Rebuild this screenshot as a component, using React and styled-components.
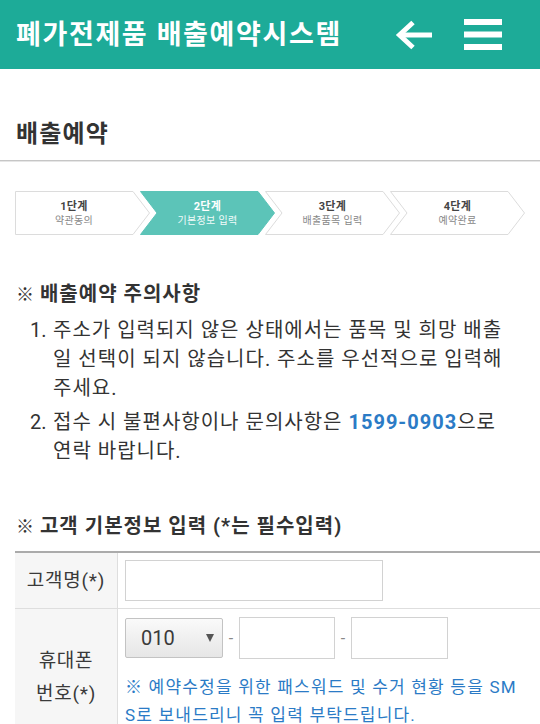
import React from 'react';
import styled, { createGlobalStyle } from 'styled-components';

const GlobalStyle = createGlobalStyle`
  html, body { margin: 0; padding: 0; background: #fff; }
  body {
    font-family: Roboto, "Noto Sans CJK KR", sans-serif;
    color: #333;
    -webkit-font-smoothing: antialiased;
  }
  * { box-sizing: border-box; }
`;

const Page = styled.div`
  width: 540px;
  overflow: hidden;
`;

const Header = styled.header`
  height: 69px;
  background: #1dab98;
  display: flex;
  align-items: center;
  padding: 0 38px 0 16px;
`;

const Title = styled.h1`
  margin: 0;
  flex: 1;
  font-size: 27px;
  line-height: 32px;
  letter-spacing: 0.06em;
  font-weight: 700;
  color: #fff;
`;

const IconButton = styled.button`
  display: flex;
  align-items: center;
  justify-content: center;
  width: 38px;
  height: 31px;
  padding: 0;
  border: 0;
  background: none;
  margin-left: ${p => p.$gap || 0}px;
`;

const PageTitle = styled.h2`
  margin: 0;
  padding: 50px 16px 11px;
  font-size: 24px;
  line-height: 30px;
  letter-spacing: 0.05em;
  font-weight: 700;
  color: #333;
  border-bottom: 1px solid #c6c6c6;
  box-shadow: 0 1px 0 #e6e6e6;
`;

const Steps = styled.div`
  display: flex;
  padding: 0 15px;
  margin-top: 30px;
  height: 44px;
`;

const Step = styled.div`
  position: relative;
  width: 135px;
  height: 44px;
  flex: none;
  margin-left: ${p => (p.$first ? 0 : -10)}px;
  padding: 0 17px 0 ${p => (p.$first ? 0 : 17)}px;
  display: flex;
  flex-direction: column;
  justify-content: center;
  align-items: center;
  gap: 1px;
`;

const StepShape = styled.svg`
  position: absolute;
  inset: 0;
  overflow: visible;
`;

const StepNo = styled.span`
  position: relative;
  font-size: 11px;
  line-height: 13px;
  letter-spacing: 0.03em;
  font-weight: 700;
  color: ${p => (p.$active ? '#fff' : '#444')};
`;

const StepName = styled.span`
  position: relative;
  font-size: 10px;
  line-height: 13px;
  letter-spacing: 0.03em;
  color: ${p => (p.$active ? '#f1fbfa' : '#888')};
`;

const Heading = styled.h3`
  margin: ${p => p.$top}px 0 0;
  padding: 0 16px;
  font-size: 20px;
  line-height: ${p => p.$lh || 24}px;
  letter-spacing: 0.05em;
  font-weight: 700;
  color: #333;
`;

const Mark = styled.span`
  font-size: 0.9em;
  letter-spacing: 0;
  font-weight: 900;
`;

const List = styled.ol`
  list-style: none;
  margin: 9px 0 0;
  padding: 0 26px 0 30px;
`;

const Item = styled.li`
  display: flex;
  font-size: 20px;
  line-height: 29px;
  letter-spacing: 0.05em;
  color: #333;
  & + & { margin-top: 5px; }
`;

const Num = styled.span`
  flex: none;
  width: 23px;
  letter-spacing: 0;
`;

const ItemText = styled.p`
  margin: 0;
  flex: 1;
`;

const Phone = styled.b`
  color: #2b7bc6;
  font-weight: 700;
`;

const Table = styled.div`
  margin: 10px 0 0 15px;
  border-top: 2px solid #ababab;
`;

const Row = styled.div`
  display: flex;
  border-bottom: 1px solid #dedede;
`;

const Label = styled.div`
  flex: none;
  width: 103px;
  background: #f6f6f6;
  border-right: 1px solid #dedede;
  display: flex;
  align-items: center;
  justify-content: center;
  text-align: center;
  font-size: 19px;
  line-height: 33px;
  letter-spacing: 0.04em;
  color: #3a3a3a;
`;

const Cell = styled.div`
  flex: 1;
  padding: ${p => p.$pad};
`;

const TextInput = styled.input`
  display: block;
  width: ${p => p.$w}px;
  height: ${p => p.$h}px;
  border: 1px solid #d2d2d2;
  background: #fff;
  border-radius: 0;
  padding: 0 8px;
  font: inherit;
  outline: none;
`;

const PhoneLine = styled.div`
  display: flex;
  align-items: center;
`;

const SelectWrap = styled.div`
  position: relative;
  width: 98px;
  height: 40px;
  flex: none;
`;

const Select = styled.select`
  appearance: none;
  -webkit-appearance: none;
  width: 100%;
  height: 100%;
  margin: 0;
  border: 1px solid #c3c3c3;
  border-radius: 2px;
  background: linear-gradient(#fafafa, #e6e6e6);
  padding: 0 0 0 15px;
  font-family: Roboto, "Noto Sans CJK KR", sans-serif;
  font-size: 20px;
  color: #3a3a3a;
`;

const Caret = styled.svg`
  position: absolute;
  right: 9px;
  top: 16px;
  pointer-events: none;
`;

const Dash = styled.span`
  flex: none;
  width: 16px;
  text-align: center;
  font-size: 16px;
  color: #888;
`;

const Note = styled.p`
  margin: 14px 0 0;
  font-size: 17px;
  line-height: 28px;
  letter-spacing: 0.07em;
  color: #2b7bc6;
  word-break: break-all;
`;

const steps = [
  { no: '1단계', name: '약관동의' },
  { no: '2단계', name: '기본정보 입력', active: true },
  { no: '3단계', name: '배출품목 입력' },
  { no: '4단계', name: '예약완료' },
];

function StepBg({ first, active }) {
  const W = 135, d = 17, h = 44;
  const path = first
    ? `M0.5 0.5 H${W - d} L${W - 0.5} ${h / 2} L${W - d} ${h - 0.5} H0.5 Z`
    : `M0.5 0.5 H${W - d} L${W - 0.5} ${h / 2} L${W - d} ${h - 0.5} H0.5 L${d} ${h / 2} Z`;
  return (
    <StepShape width={W} height={h} viewBox={`0 0 ${W} ${h}`}>
      <path
        d={path}
        fill={active ? '#5cc4b8' : '#fff'}
        stroke={active ? '#5cc4b8' : '#dcdcdc'}
        strokeWidth="1"
      />
    </StepShape>
  );
}

export default function App() {
  return (
    <Page>
      <GlobalStyle />
      <Header>
        <Title>폐가전제품 배출예약시스템</Title>
        <IconButton aria-label="뒤로">
          <svg width="38" height="30" viewBox="0 0 38 30">
            <path d="M5 15 H37" stroke="#fff" strokeWidth="5" fill="none" />
            <path d="M18 2.5 L4.5 15 L18 27.5" stroke="#fff" strokeWidth="5" fill="none" strokeLinejoin="miter" />
          </svg>
        </IconButton>
        <IconButton $gap={31} aria-label="메뉴">
          <svg width="38" height="31" viewBox="0 0 38 31">
            <rect x="0" y="0" width="38" height="6" fill="#fff" />
            <rect x="0" y="12.5" width="38" height="6" fill="#fff" />
            <rect x="0" y="25" width="38" height="6" fill="#fff" />
          </svg>
        </IconButton>
      </Header>

      <PageTitle>배출예약</PageTitle>

      <Steps>
        {steps.map((s, i) => (
          <Step key={s.no} $first={i === 0}>
            <StepBg first={i === 0} active={s.active} />
            <StepNo $active={s.active}>{s.no}</StepNo>
            <StepName $active={s.active}>{s.name}</StepName>
          </Step>
        ))}
      </Steps>

      <Heading $top={47}><Mark>※</Mark> 배출예약 주의사항</Heading>
      <List>
        <Item>
          <Num>1.</Num>
          <ItemText>주소가 입력되지 않은 상태에서는 품목 및 희망 배출일 선택이 되지 않습니다. 주소를 우선적으로 입력해 주세요.</ItemText>
        </Item>
        <Item>
          <Num>2.</Num>
          <ItemText>접수 시 불편사항이나 문의사항은 <Phone>1599-0903</Phone>으로 연락 바랍니다.</ItemText>
        </Item>
      </List>

      <Heading $top={46} $lh={28}><Mark>※</Mark> 고객 기본정보 입력 (*는 필수입력)</Heading>
      <Table>
        <Row>
          <Label>고객명(*)</Label>
          <Cell $pad="7px 0 7px 7px">
            <TextInput $w={258} $h={41} />
          </Cell>
        </Row>
        <Row>
          <Label>휴대폰<br />번호(*)</Label>
          <Cell $pad="8px 20px 15px 7px">
            <PhoneLine>
              <SelectWrap>
                <Select defaultValue="010">
                  <option value="010">010</option>
                  <option value="011">011</option>
                  <option value="016">016</option>
                  <option value="017">017</option>
                  <option value="018">018</option>
                  <option value="019">019</option>
                </Select>
                <Caret width="8" height="8" viewBox="0 0 8 8">
                  <path d="M0 0 H8 L4 8 Z" fill="#555" />
                </Caret>
              </SelectWrap>
              <Dash>-</Dash>
              <TextInput $w={96} $h={42} />
              <Dash>-</Dash>
              <TextInput $w={97} $h={42} />
            </PhoneLine>
            <Note>※ 예약수정을 위한 패스워드 및 수거 현황 등을 SMS로 보내드리니 꼭 입력 부탁드립니다.</Note>
          </Cell>
        </Row>
      </Table>
    </Page>
  );
}
